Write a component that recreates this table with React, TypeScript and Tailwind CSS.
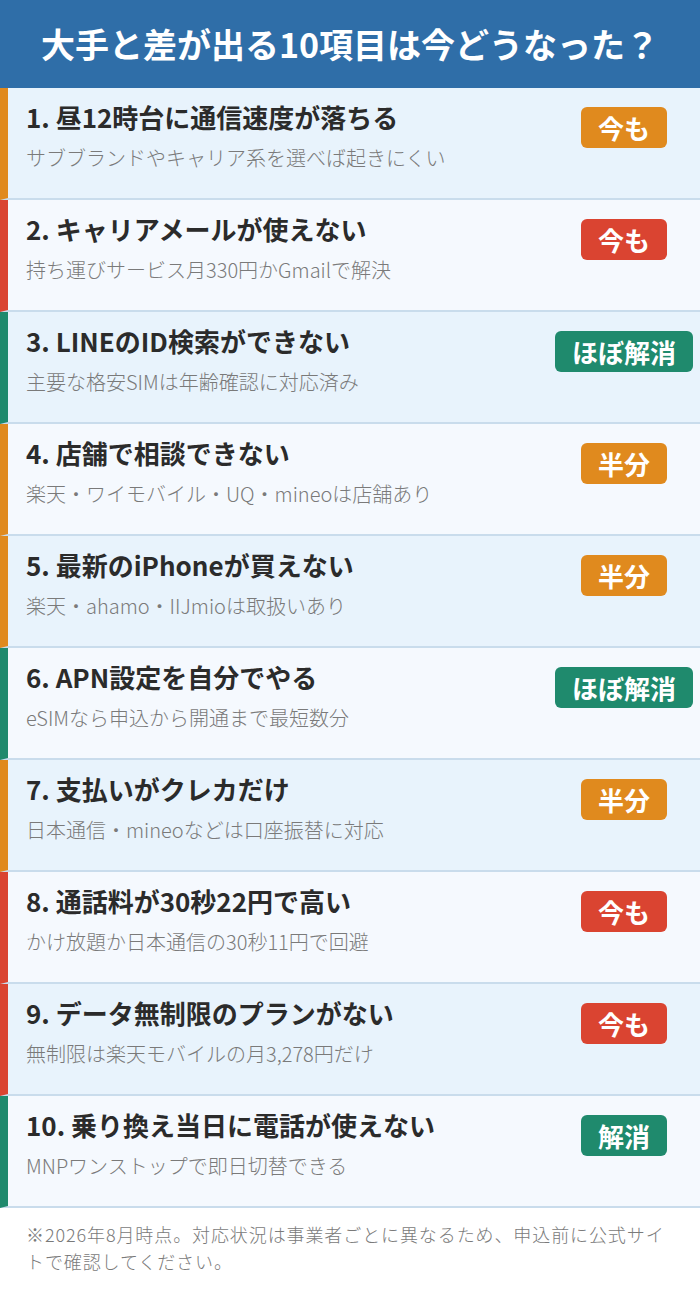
import * as React from "react";

type Status = "orange" | "red" | "green";

const items: { title: string; note: string; badge: string; status: Status }[] = [
  { title: "1. 昼12時台に通信速度が落ちる", note: "サブブランドやキャリア系を選べば起きにくい", badge: "今も", status: "orange" },
  { title: "2. キャリアメールが使えない", note: "持ち運びサービス月330円かGmailで解決", badge: "今も", status: "red" },
  { title: "3. LINEのID検索ができない", note: "主要な格安SIMは年齢確認に対応済み", badge: "ほぼ解消", status: "green" },
  { title: "4. 店舗で相談できない", note: "楽天・ワイモバイル・UQ・mineoは店舗あり", badge: "半分", status: "orange" },
  { title: "5. 最新のiPhoneが買えない", note: "楽天・ahamo・IIJmioは取扱いあり", badge: "半分", status: "orange" },
  { title: "6. APN設定を自分でやる", note: "eSIMなら申込から開通まで最短数分", badge: "ほぼ解消", status: "green" },
  { title: "7. 支払いがクレカだけ", note: "日本通信・mineoなどは口座振替に対応", badge: "半分", status: "orange" },
  { title: "8. 通話料が30秒22円で高い", note: "かけ放題か日本通信の30秒11円で回避", badge: "今も", status: "red" },
  { title: "9. データ無制限のプランがない", note: "無制限は楽天モバイルの月3,278円だけ", badge: "今も", status: "red" },
  { title: "10. 乗り換え当日に電話が使えない", note: "MNPワンストップで即日切替できる", badge: "解消", status: "green" },
];

const barColor: Record<Status, string> = {
  orange: "border-l-[#e08a1e]",
  red: "border-l-[#da4431]",
  green: "border-l-[#1f8a6d]",
};

const badgeColor: Record<Status, string> = {
  orange: "bg-[#e08a1e]",
  red: "bg-[#da4431]",
  green: "bg-[#1f8a6d]",
};

export default function App() {
  return (
    <div className="w-[700px] bg-white font-['Noto_Sans_CJK_JP',sans-serif]">
      {/* Header */}
      <div className="h-[88px] bg-[#2f6ea8] flex items-center justify-center">
        <h1 className="text-white text-[34px] font-bold leading-none">大手と差が出る10項目は今どうなった？</h1>
      </div>

      {/* Rows */}
      {items.map((it, i) => (
        <div
          key={i}
          className={`flex h-[112px] border-l-8 border-b-2 border-b-[#c9dcec] ${barColor[it.status]} ${
            i % 2 === 0 ? "bg-[#e8f3fc]" : "bg-[#f5f9fe]"
          }`}
        >
          <div className="flex-1 pl-[18px] pt-[12px]">
            <div className="text-[26px] leading-[34px] font-bold text-[#2b2b2b]">{it.title}</div>
            <div className="mt-[10px] text-[20px] leading-[28px] font-light text-[#7a7a7a]">{it.note}</div>
          </div>
          <div className="w-[140px] mr-[6px] pt-[19px] flex justify-center items-start">
            <span
              className={`h-[41px] px-[17px] rounded-[6px] flex items-center text-white text-[26px] font-bold ${badgeColor[it.status]}`}
            >
              {it.badge}
            </span>
          </div>
        </div>
      ))}

      {/* Footer note */}
      <div className="px-[26px] pt-[13px] pb-4 text-[18px] leading-[27px] font-light tracking-[0.05em] text-[#7a7a7a]">
        ※2026年8月時点。対応状況は事業者ごとに異なるため、申込前に公式サイトで確認してください。
      </div>
    </div>
  );
}
